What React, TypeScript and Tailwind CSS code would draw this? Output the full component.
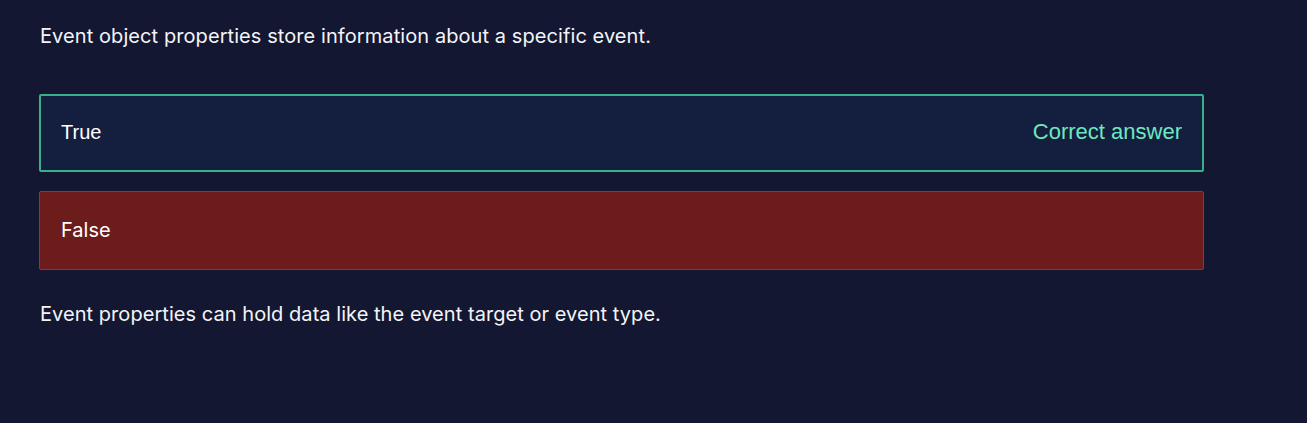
export default function App() {
  return (
    <div className="w-[1307px] h-[423px] bg-[#131731] text-white" style={{ fontFamily: "Inter, 'Noto Sans', sans-serif" }}>
      <div className="pl-[39px] pt-[24px] w-[1204px]">
        <p className="pl-[1px] text-[20px] leading-[24px] tracking-[0.08px] text-[#f4f4f8]">Event object properties store information about a specific event.</p>
        <div className="mt-[46px] flex flex-col gap-[19px]">
          <div className="h-[78px] border-2 border-[#3ab08a] rounded-[2px] bg-[#141e3e] flex items-center justify-between px-[20px] pb-[3px]">
            <span className="text-[20px] text-white" style={{ fontFamily: "'Liberation Sans', Arial, sans-serif" }}>True</span>
            <span className="text-[22px] text-[#6ee7c0]" style={{ fontFamily: "'Liberation Sans', Arial, sans-serif" }}>Correct answer</span>
          </div>
          <div className="h-[79px] border border-[#b3262a] rounded-[2px] bg-[#6b1c1b] flex items-center pl-[21px] pb-[2px]">
            <span className="text-[20px] text-white">False</span>
          </div>
        </div>
        <p className="mt-[32px] pl-[1px] text-[20px] leading-[24px] tracking-[0.05px] text-[#f4f4f8]">Event properties can hold data like the event target or event type.</p>
      </div>
    </div>
  );
}
